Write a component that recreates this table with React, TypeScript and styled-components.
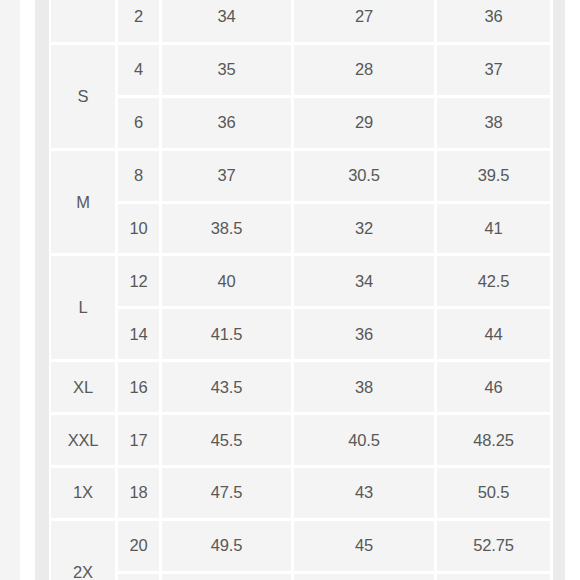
import React from 'react';
import styled, { createGlobalStyle } from 'styled-components';

const GlobalStyle = createGlobalStyle`
  html, body {
    margin: 0;
    padding: 0;
    background: #ffffff;
    overflow: hidden;
  }
  body {
    font-family: 'Liberation Sans', Arial, Helvetica, sans-serif;
  }
`;

const Page = styled.div`
  display: flex;
  height: 580px;
  overflow: hidden;
`;

const SideStrip = styled.div`
  width: 20px;
  flex-shrink: 0;
  background: #f4f4f4;
`;

const Gutter = styled.div`
  width: 15px;
  flex-shrink: 0;
`;

const Panel = styled.div`
  width: 530px;
  flex-shrink: 0;
  box-sizing: border-box;
  padding: 0 12px 0 14px;
  background: #ebebeb;
`;

const Table = styled.div`
  display: grid;
  grid-template-columns: 64px 41px 129px 140px 113px;
  grid-auto-rows: 49.9px;
  gap: 3px;
  padding: 0 3px 3px 2px;
  margin-top: -8px;
  background: #ffffff;
`;

const Cell = styled.div<{ $span?: number }>`
  grid-row: span ${({ $span }) => $span ?? 1};
  display: flex;
  align-items: center;
  justify-content: center;
  background: #f4f4f4;
  color: #585858;
  font-size: 16.5px;
  letter-spacing: -0.2px;
`;

type Group = {
  label: string;
  rows: string[][];
};

// the last row of 2X runs below the fold, so its values stay blank
const groups: Group[] = [
  { label: '', rows: [['2', '34', '27', '36']] },
  { label: 'S', rows: [['4', '35', '28', '37'], ['6', '36', '29', '38']] },
  { label: 'M', rows: [['8', '37', '30.5', '39.5'], ['10', '38.5', '32', '41']] },
  { label: 'L', rows: [['12', '40', '34', '42.5'], ['14', '41.5', '36', '44']] },
  { label: 'XL', rows: [['16', '43.5', '38', '46']] },
  { label: 'XXL', rows: [['17', '45.5', '40.5', '48.25']] },
  { label: '1X', rows: [['18', '47.5', '43', '50.5']] },
  { label: '2X', rows: [['20', '49.5', '45', '52.75'], ['', '', '', '']] },
];

const App = () => (
  <>
    <GlobalStyle />
    <Page>
      <SideStrip />
      <Gutter />
      <Panel>
        <Table>
          {groups.map((g) =>
            g.rows.map((r, i) => (
              <React.Fragment key={`${g.label}-${i}`}>
                {i === 0 && <Cell $span={g.rows.length}>{g.label}</Cell>}
                {r.map((v, j) => (
                  <Cell key={j}>{v}</Cell>
                ))}
              </React.Fragment>
            ))
          )}
        </Table>
      </Panel>
    </Page>
  </>
);

export default App;
